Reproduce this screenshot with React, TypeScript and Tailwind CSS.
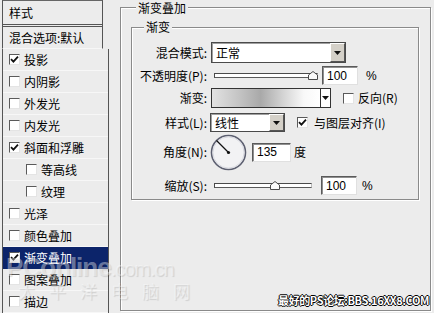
import type { ReactNode } from "react"

const styleItems = [
  { label: "投影", checked: true },
  { label: "内阴影" },
  { label: "外发光" },
  { label: "内发光" },
  { label: "斜面和浮雕", checked: true },
  { label: "等高线", indent: true },
  { label: "纹理", indent: true },
  { label: "光泽" },
  { label: "颜色叠加" },
  { label: "渐变叠加", checked: true, active: true },
  { label: "图案叠加" },
  { label: "描边" },
]

function CheckBox({ checked = false }: { checked?: boolean }) {
  return (
    <span className="w-[11px] h-[11px] shrink-0 bg-white border border-t-[#5a5a5a] border-l-[#5a5a5a] border-b-[#e4e4e4] border-r-[#e4e4e4] flex items-center justify-center">
      {checked && (
        <svg width="9" height="9" viewBox="0 0 9 9">
          <path d="M1 4.2 L3.4 6.6 L8 1.6" stroke="#111" strokeWidth="1.8" fill="none" />
        </svg>
      )}
    </span>
  )
}

function Arrow() {
  return (
    <svg width="7" height="4" viewBox="0 0 7 4">
      <path d="M0 0 H7 L3.5 4 Z" fill="#111" />
    </svg>
  )
}

function Select({ width, value }: { width: string; value: string }) {
  return (
    <div className={`${width} h-full flex bg-white border border-[#4a4a4a] shadow-[inset_1px_1px_0_#a0a0a0]`}>
      <span className="flex-1 pl-[4px] flex items-center">{value}</span>
      <span className="w-[15px] h-full bg-[#d4d0c8] border border-t-white border-l-white border-b-[#555] border-r-[#555] flex items-center justify-center">
        <Arrow />
      </span>
    </div>
  )
}

function NumInput({ width, value }: { width: string; value: string }) {
  return (
    <div className={`${width} h-[19px] bg-white border border-t-[#5a5a5a] border-l-[#5a5a5a] border-b-[#e0e0e0] border-r-[#e0e0e0] shadow-[inset_1px_1px_0_#909090] pl-[4px] flex items-center font-['Liberation_Sans',sans-serif] text-[12px]`}>
      {value}
    </div>
  )
}

function Slider({ width, thumb }: { width: string; thumb: string }) {
  return (
    <div className={`${width} h-[12px] relative flex items-center`}>
      <div className="w-full h-[5px] bg-white border border-t-[#4a4a4a] border-l-[#4a4a4a] border-b-[#5a5a5a] border-r-[#bdbdbd]" />
      <svg className={`absolute top-[1px] ${thumb}`} width="10" height="9" viewBox="0 0 10 9">
        <path d="M0.5 8.5 V4 L5 0.5 L9.5 4 V8.5 Z" fill="#fafafa" stroke="#4a4a4a" />
      </svg>
    </div>
  )
}

function Row({ label, className, children }: { label: string; className: string; children: ReactNode }) {
  return (
    <div className={`flex items-center ${className}`}>
      <span className="w-[75px] shrink-0 text-right">{label}</span>
      {children}
    </div>
  )
}

export default function App() {
  return (
    <div className="w-[434px] h-[313px] bg-[#ececec] flex relative overflow-hidden text-[12px] leading-none text-black font-['Noto_Sans_CJK_SC','Noto_Sans',sans-serif]">
      {/* Styles list */}
      <div className="ml-[2px] w-[107px] shrink-0 flex flex-col">
        <div className="w-[101px] h-[27px] shrink-0 border border-b-[3px] border-double border-[#555] border-t-[#666] flex items-center pl-[6px]">
          样式
        </div>
        <div className="w-[101px] h-[22px] shrink-0 border-l border-r border-[#555] border-b border-b-[#f7f7f7] flex items-center pl-[6px]">
          混合选项:默认
        </div>
        <div className="flex-1 border-l border-r border-[#555] flex flex-col">
          {styleItems.map((item) => (
            <div
              key={item.label}
              className={`h-[22px] shrink-0 flex items-center gap-[4px] border-b ${
                item.active ? "bg-[#0c246a] text-white border-[#0c246a]" : "border-[#f7f7f7]"
              } ${item.indent ? "pl-[23px]" : "pl-[6px]"}`}
            >
              <CheckBox checked={item.checked} />
              <span>{item.label}</span>
            </div>
          ))}
        </div>
      </div>

      {/* Settings */}
      <div className="flex-1 flex flex-col pt-[7px] pl-[11px] pr-[3px] pb-[2px]">
        <div className="flex-1 relative border border-[#8a8a8a] shadow-[inset_1px_1px_0_#fff,1px_1px_0_#fff] flex flex-col">
          <span className="absolute -top-[6px] left-[15px] px-[2px] bg-[#ececec]">渐变叠加</span>

          <div className="mt-[19px] ml-[10px] mr-[11px] h-[173px] relative border border-[#8a8a8a] shadow-[inset_1px_1px_0_#fff,1px_1px_0_#fff] flex flex-col pt-[14px]">
            <span className="absolute -top-[7px] left-[12px] px-[2px] bg-[#ececec]">渐变</span>

            <Row label="混合模式:" className="h-[21px]">
              <div className="ml-[4px] h-full flex">
                <Select width="w-[135px]" value="正常" />
              </div>
            </Row>

            <Row label="不透明度(P):" className="h-[19px] mt-[3px]">
              <div className="ml-[7px]">
                <Slider width="w-[104px]" thumb="left-[94px]" />
              </div>
              <div className="ml-[4px]">
                <NumInput width="w-[36px]" value="100" />
              </div>
              <span className="ml-[8px] font-['Liberation_Sans',sans-serif]">%</span>
            </Row>

            <Row label="渐变:" className="h-[20px] mt-[3px]">
              <div className="ml-[4px] w-[120px] h-full flex border border-[#333] bg-white">
                <div className="flex-1 bg-[linear-gradient(to_right,#e2e2e2_0%,#c4c4c4_25%,#a9a9a9_45%,#d2d2d2_65%,#f8f8f8_85%,#ffffff_100%)]" />
                <span className="w-[10px] border-l border-[#333] flex items-center justify-center">
                  <Arrow />
                </span>
              </div>
              <div className="ml-[12px]">
                <CheckBox />
              </div>
              <span className="ml-[4px]">反向(R)</span>
            </Row>

            <Row label="样式(L):" className="h-[19px] mt-[5px]">
              <div className="ml-[3px] h-full flex">
                <Select width="w-[75px]" value="线性" />
              </div>
              <div className="ml-[12px]">
                <CheckBox checked />
              </div>
              <span className="ml-[6px]">与图层对齐(I)</span>
            </Row>

            <Row label="角度(N):" className="h-[38px] mt-[1px]">
              <svg className="ml-[3px]" width="37" height="37" viewBox="0 0 37 37">
                <circle cx="18.5" cy="18.5" r="17" fill="#f2f2f4" stroke="#5c5f70" strokeWidth="1.6" />
                <circle cx="18.5" cy="18.5" r="15.6" fill="none" stroke="#d8d9e0" strokeWidth="1" />
                <line x1="18.5" y1="18.5" x2="6.5" y2="6.5" stroke="#111" strokeWidth="1.2" />
                <circle cx="18.5" cy="18.5" r="1.6" fill="#111" />
              </svg>
              <div className="ml-[5px]">
                <NumInput width="w-[39px]" value="135" />
              </div>
              <span className="ml-[3px]">度</span>
            </Row>

            <Row label="缩放(S):" className="h-[19px] mt-[5px]">
              <div className="ml-[7px]">
                <Slider width="w-[98px]" thumb="left-[56px]" />
              </div>
              <div className="ml-[9px]">
                <NumInput width="w-[36px]" value="100" />
              </div>
              <span className="ml-[5px] font-['Liberation_Sans',sans-serif]">%</span>
            </Row>
          </div>
        </div>
      </div>

      {/* Watermarks */}
      <span className="absolute left-[6px] top-[254px] whitespace-nowrap text-[26px] font-bold tracking-[-1px] text-white/40 [text-shadow:1px_1px_1px_rgba(0,0,0,0.12)] font-['Liberation_Sans',sans-serif] pointer-events-none">
        PConline<span className="text-[20px] font-normal">.com.cn</span>
      </span>
      <span className="absolute left-[18px] top-[282px] whitespace-nowrap text-[17px] tracking-[14px] text-white/40 [text-shadow:1px_1px_1px_rgba(0,0,0,0.12)] pointer-events-none">
        太平洋电脑网
      </span>
      <span className="absolute right-[5px] top-[295px] whitespace-nowrap text-[11px] font-bold tracking-[-0.4px] text-white [text-shadow:1px_0_0_#000,-1px_0_0_#000,0_1px_0_#000,0_-1px_0_#000] font-['Noto_Sans_CJK_SC','Liberation_Mono',monospace]">
        最好的PS论坛:BBS.16XX8.COM
      </span>
    </div>
  )
}
